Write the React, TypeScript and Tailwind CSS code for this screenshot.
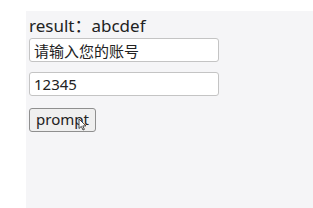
export default function App() {
  return (
    <div className="w-[313px] h-[208px] bg-white pt-[11px] pl-[26px] flex">
      <div className="flex-1 bg-[#f5f5f7] px-[3px] pt-[2px] flex flex-col items-start font-['Noto_Sans','Noto_Sans_CJK_SC',sans-serif] text-[#222]">
        <div className="h-[25px] leading-[25px] text-[17px]">result：abcdef</div>
        <input
          readOnly
          defaultValue="请输入您的账号"
          className="w-[190px] h-[24px] bg-white border border-[#c4c4c4] rounded-[3px] px-[4px] text-[15px] text-[#222] outline-none"
        />
        <input
          readOnly
          defaultValue="12345"
          className="mt-[10px] w-[190px] h-[24px] bg-white border border-[#c4c4c4] rounded-[3px] px-[4px] text-[15px] text-[#222] outline-none"
        />
        <div className="relative mt-[11px]">
          <button className="w-[67px] h-[24px] bg-[#efefef] border border-[#8f8f8f] rounded-[3px] text-[15px] leading-[20px] text-[#222] pb-[2px]">
            prompt
          </button>
          <svg
            className="absolute left-[49px] top-[11px]"
            width="9"
            height="13"
            viewBox="0 0 9 13"
          >
            <path d="M1 1 L1 10.5 L3.3 8.4 L5 12 L6.4 11.4 L4.8 7.9 L8 7.9 Z" fill="white" stroke="#333" strokeWidth="0.9" />
          </svg>
        </div>
      </div>
    </div>
  )
}
